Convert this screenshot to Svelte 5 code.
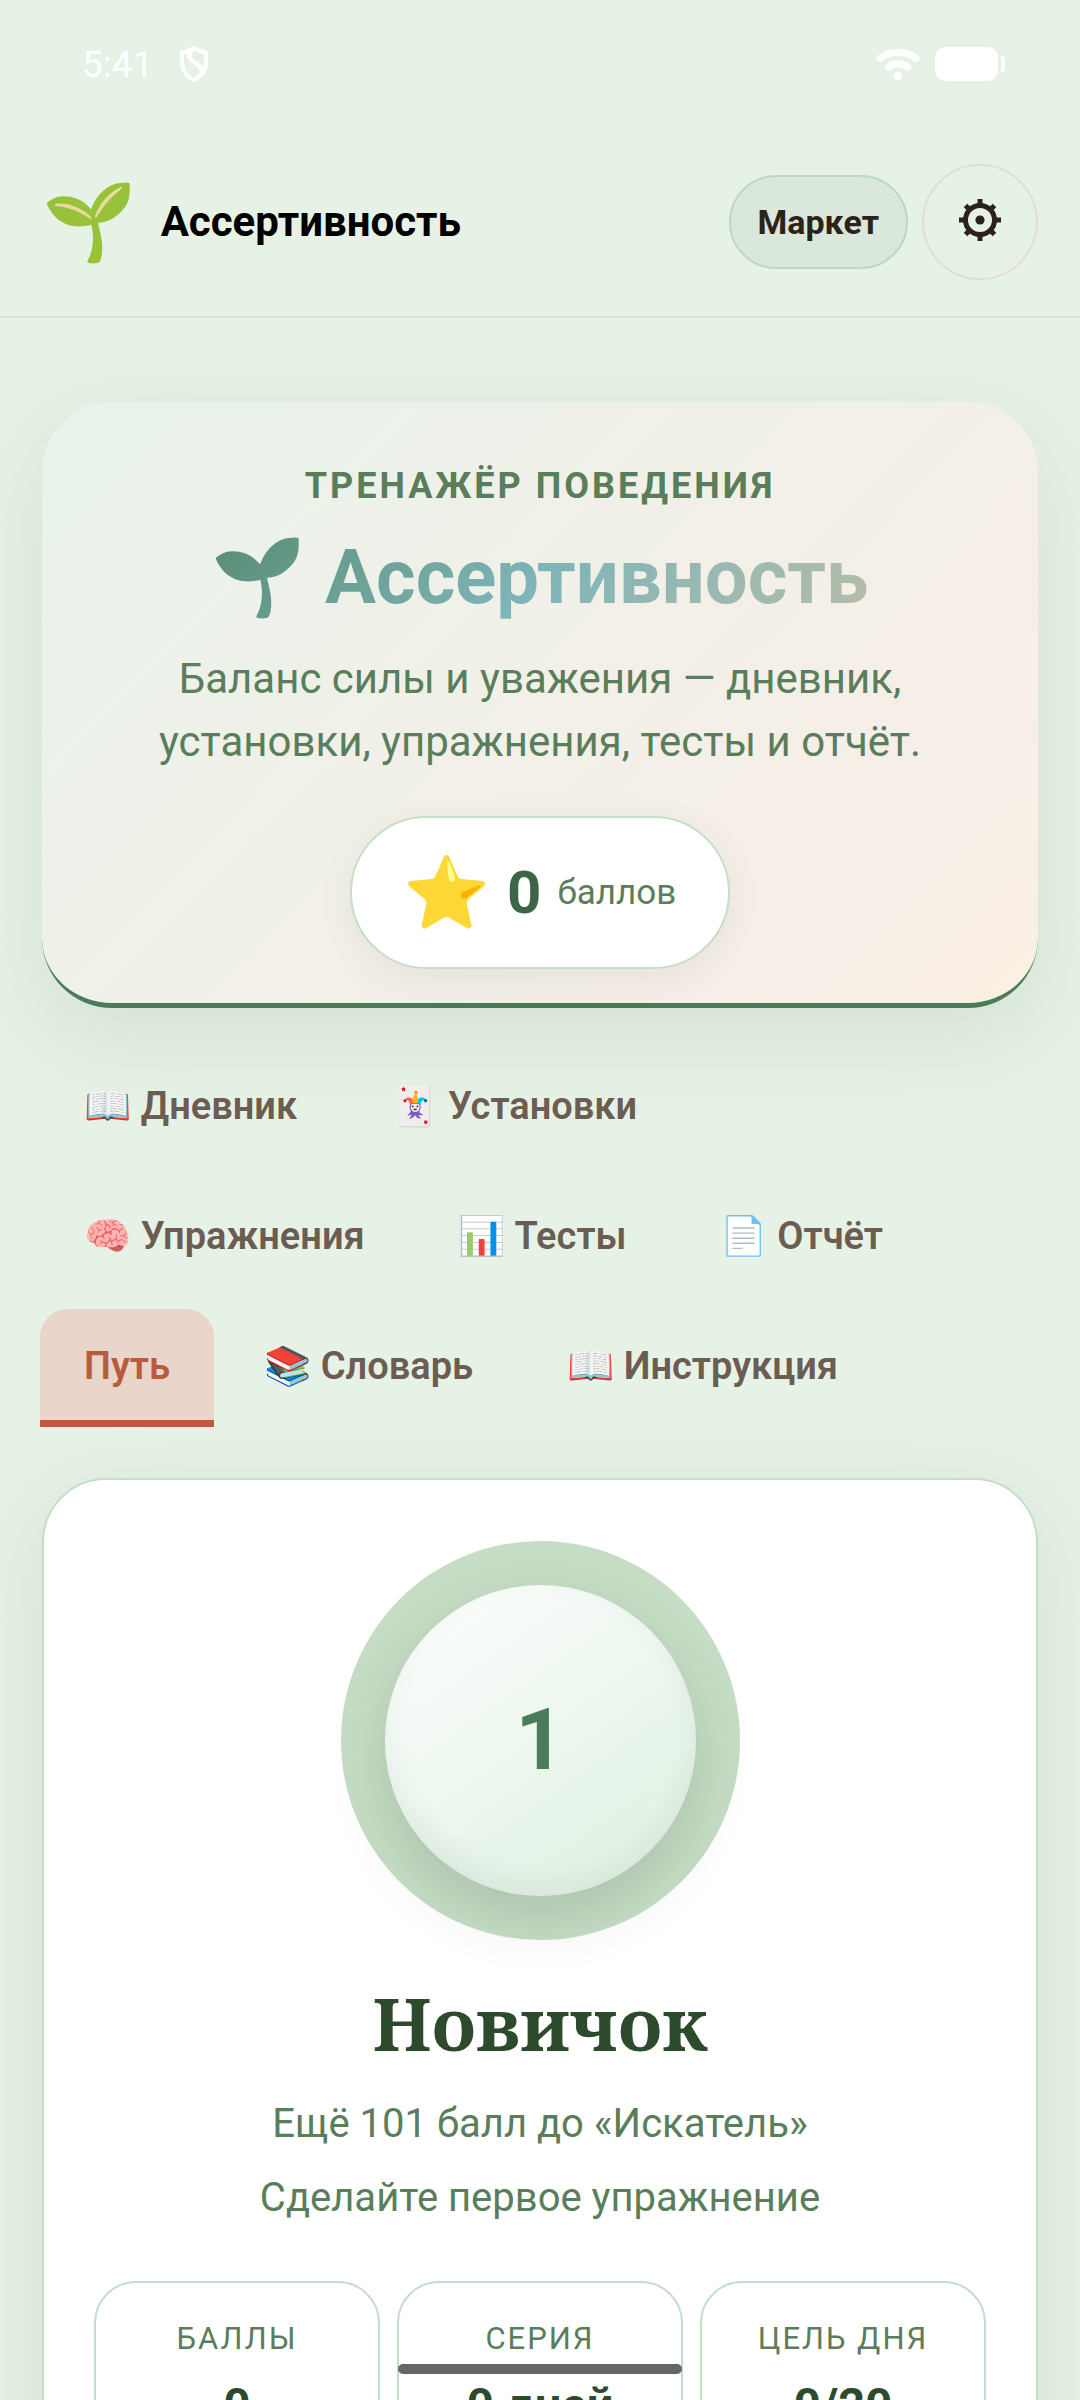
<script>
  const tabs = [
    { icon: '📖', label: 'Дневник' },
    { icon: '🃏', label: 'Установки' },
    { icon: '🧠', label: 'Упражнения' },
    { icon: '📊', label: 'Тесты' },
    { icon: '📄', label: 'Отчёт' },
    { icon: '', label: 'Путь' },
    { icon: '📚', label: 'Словарь' },
    { icon: '📖', label: 'Инструкция' }
  ];
  const stats = [
    { label: 'Баллы', value: '0' },
    { label: 'Серия', value: '0 дней' },
    { label: 'Цель дня', value: '0/20' }
  ];
  let active = $state('Путь');
</script>

<div class="app">
  <div class="status">
    <span class="time">5:41</span>
    <svg class="shield" viewBox="0 0 30 36" aria-hidden="true">
      <path d="M15 2C18 4 23 5.500 27 6.500V16C27 24 22 30.500 15 34 8 30.500 3 24 3 16V6.500C7 5.500 12 4 15 2ZM13.500 3.500C8.500 8 9.500 12 15 16 21.500 20.500 24 23 22.500 28" />
    </svg>
    <span class="grow"></span>
    <svg class="wifi" viewBox="0 0 44 34" aria-hidden="true">
      <path d="M4 11.500C14 3 30 3 40 11.500M12.500 20C18 15.500 26 15.500 31.500 20" />
      <circle cx="22" cy="29" r="4.200" />
    </svg>
    <svg class="battery" viewBox="0 0 70 34" aria-hidden="true">
      <rect width="63" height="34" rx="10" />
      <path d="M66 9a4 4 0 0 1 4 4v8a4 4 0 0 1-4 4z" />
    </svg>
  </div>

  <header class="bar">
    <span class="logo">🌱</span>
    <span class="brand">Ассертивность</span>
    <button class="market">Маркет</button>
    <button class="gear" aria-label="Настройки">
      <svg viewBox="0 0 42 42" aria-hidden="true">
        <circle class="rim" cx="21" cy="21" r="14.500" />
        <circle cx="21" cy="21" r="4.600" />
        <path d="M21 0v7M21 35v7M0 21h7M35 21h7" />
        <path d="m6.500 6.500 4.500 4.500M31 31l4.500 4.500M35.500 6.500 31 11M11 31l-4.500 4.500" />
      </svg>
    </button>
  </header>

  <main>
    <section class="hero">
      <p class="eyebrow">Тренажёр поведения</p>
      <h1>🌱 Ассертивность</h1>
      <p class="lead">Баланс силы и уважения — дневник, установки, упражнения, тесты и отчёт.</p>
      <div class="points"><span class="star">⭐</span><strong>0</strong><span>баллов</span></div>
    </section>

    <nav class="tabs">
      {#each tabs as tab}
        <button class:active={active === tab.label} onclick={() => (active = tab.label)}>
          {tab.icon} {tab.label}
        </button>
      {/each}
    </nav>

    <section class="card">
      <div class="ring"><div class="disc">1</div></div>
      <h2>Новичок</h2>
      <p>Ещё 101 балл до «Искатель»</p>
      <p>Сделайте первое упражнение</p>
      <div class="stats">
        {#each stats as stat}
          <div class="stat">
            <span>{stat.label}</span>
            <strong>{stat.value}</strong>
          </div>
        {/each}
      </div>
    </section>
  </main>
  <div class="home"></div>
</div>

<style>
  :global(body) {
    margin: 0;
    background: #e7f2e6;
  }
  .app {
    height: 100vh;
    overflow: hidden;
    box-sizing: border-box;
    font-family: Roboto, 'Noto Color Emoji', sans-serif;
    background: #e7f2e6;
    color: #5a7d5a;
  }
  .app *,
  .app *::before {
    box-sizing: border-box;
  }
  button {
    font-family: inherit;
    margin: 0;
    cursor: pointer;
  }
  h1,
  h2,
  p {
    margin: 0;
  }
  .status {
    display: flex;
    align-items: center;
    height: 128px;
    padding: 0 75px 0 82px;
    color: #fff;
    font-size: 37px;
  }
  .status svg {
    fill: #fff;
  }
  .status .shield {
    width: 30px;
    height: 36px;
    margin-left: 26px;
    fill: none;
    stroke: #fff;
    stroke-width: 4;
    stroke-linejoin: round;
  }
  .grow {
    flex: 1;
  }
  .wifi {
    width: 44px;
    height: 34px;
    margin-right: 15px;
  }
  .wifi path {
    fill: none;
    stroke: #fff;
    stroke-width: 7;
    stroke-linecap: round;
  }
  .battery {
    width: 70px;
    height: 34px;
  }
  .bar {
    display: flex;
    align-items: center;
    height: 190px;
    padding: 0 42px;
    border-bottom: 2px solid #d9e5df;
  }
  .logo {
    font-size: 76px;
    line-height: 84px;
  }
  .brand {
    flex: 1;
    margin-left: 24px;
    padding-bottom: 2px;
    color: #000;
    font-size: 42px;
    font-weight: 700;
  }
  .market {
    height: 94px;
    padding: 0 27px;
    border: 2px solid #bbd7c8;
    border-radius: 47px;
    background: #dae8dc;
    color: #2c2218;
    font-size: 34px;
    font-weight: 700;
  }
  .gear {
    display: grid;
    place-items: center;
    width: 116px;
    height: 116px;
    margin-left: 14px;
    padding: 0 0 4px;
    border: 2px solid #e6dcd6;
    border-radius: 50%;
    background: none;
  }
  .gear svg {
    width: 42px;
    height: 42px;
    fill: #2c2218;
    stroke: #2c2218;
    stroke-width: 5;
  }
  .gear circle {
    stroke: none;
  }
  .gear .rim {
    fill: none;
    stroke: #2c2218;
    stroke-width: 5;
  }
  main {
    padding: 84px 42px 0;
  }
  .hero {
    display: flex;
    flex-direction: column;
    align-items: center;
    padding: 60px 42px 34px;
    border-bottom: 5px solid #4a7c59;
    border-radius: 70px;
    background: linear-gradient(135deg, #e8f3eb 0%, #f2f0e8 50%, #f7eee8 83%, #faf0e2 100%);
    box-shadow: 0 28px 84px rgba(45, 74, 62, 0.1);
    text-align: center;
  }
  .eyebrow {
    font-size: 36px;
    line-height: 48px;
    font-weight: 700;
    letter-spacing: 3px;
    text-transform: uppercase;
  }
  h1 {
    width: 100%;
    padding: 21px 0 24px;
    font-size: 76px;
    line-height: 92px;
    font-weight: 700;
    background: linear-gradient(135deg, #4a7c59 0%, #7eb5b8 50%, #d0c0a1 100%);
    background-clip: text;
    -webkit-background-clip: text;
    color: transparent;
  }
  .lead {
    font-size: 42px;
    line-height: 63px;
  }
  .points {
    display: flex;
    align-items: center;
    gap: 16px;
    height: 153px;
    margin-top: 43px;
    padding: 0 52px;
    border: 2px solid #c5dec8;
    border-radius: 77px;
    background: #fff;
    box-shadow: 0 10px 36px rgba(45, 74, 62, 0.07);
    font-size: 35px;
  }
  .star {
    font-size: 70px;
  }
  .points strong {
    color: #3d6648;
    font-size: 60px;
  }
  .tabs {
    display: flex;
    flex-wrap: wrap;
    gap: 12px 6px;
    margin: 41px 0 51px -2px;
  }
  .tabs button {
    height: 118px;
    padding: 2px 44px 0;
    border: 0;
    border-bottom: 7px solid transparent;
    border-radius: 28px 28px 0 0;
    background: none;
    color: #6b5d52;
    font-size: 38px;
    font-weight: 600;
  }
  .tabs .active {
    border-color: #b95b3c;
    background: #e9d5ca;
    color: #b95b3c;
  }
  .card {
    padding: 61px 50px;
    border: 2px solid #c5dec8;
    border-radius: 64px;
    background: #fff;
    box-shadow: 0 22px 84px rgba(45, 74, 62, 0.1);
    text-align: center;
  }
  .ring {
    display: grid;
    place-items: center;
    width: 399px;
    height: 399px;
    margin: 0 auto 40px;
    border-radius: 50%;
    background: #c5ddc5;
  }
  .disc {
    display: grid;
    place-items: center;
    width: 311px;
    height: 311px;
    padding-bottom: 2px;
    border-radius: 50%;
    background: linear-gradient(145deg, #fff 0%, #e7f4ea 65%, #e1f3e1 100%);
    box-shadow:
      0 22px 60px rgba(0, 0, 0, 0.13),
      inset 0 -11px 30px rgba(0, 0, 0, 0.06);
    color: #4a7c59;
    font-size: 86px;
    font-weight: 700;
  }
  h2 {
    margin-bottom: 28px;
    color: #2d4a2d;
    font-family: 'Noto Serif', 'DejaVu Serif', serif;
    font-size: 73px;
    line-height: 86px;
  }
  .card p {
    font-size: 40px;
    line-height: 60px;
    margin-bottom: 14px;
  }
  .stats {
    display: grid;
    grid-template-columns: repeat(3, 1fr);
    gap: 17px;
    margin-top: 53px;
  }
  .stat {
    display: flex;
    flex-direction: column;
    padding: 36px 20px 40px;
    border: 2px solid #c5dec8;
    border-radius: 42px;
  }
  .stat span {
    font-size: 31px;
    line-height: 40px;
    letter-spacing: 2px;
    text-transform: uppercase;
  }
  .stat strong {
    margin-top: 16px;
    color: #2d4a2d;
    font-size: 47px;
    line-height: 60px;
  }
  .home {
    position: fixed;
    left: 50%;
    bottom: 26px;
    width: 284px;
    height: 10px;
    margin-left: -142px;
    border-radius: 5px;
    background: #666;
  }
</style>
